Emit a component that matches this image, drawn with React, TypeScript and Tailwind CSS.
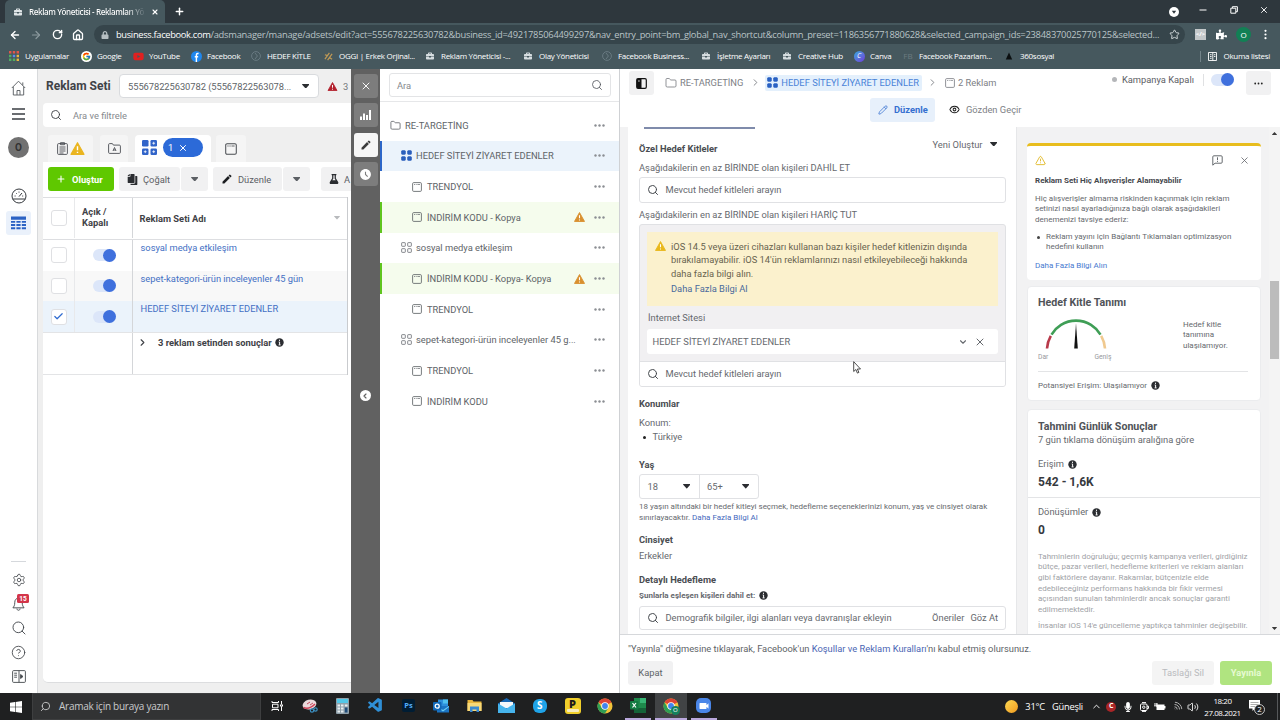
import type { ReactNode } from "react";
import {
  ArrowLeft, ArrowRight, Check, ChevronDown, ChevronLeft, ChevronRight, ChevronUp, CircleHelp, Eye, Folder,
  House, Pencil, Plus, RotateCw, Search, Settings, Star, TriangleAlert, Volume2, Wifi, X,
} from "lucide-react";
import { FaCopy, FaFlask, FaLock, FaMicrophone, FaPuzzlePiece, FaYoutube, FaBriefcase } from "react-icons/fa";
import { MdEdit, MdAccessTimeFilled, MdVideocam } from "react-icons/md";
import { FcGoogle } from "react-icons/fc";
import { VscVscode } from "react-icons/vsc";

/* ---------- small drawings ---------- */

const Caret = ({ className = "h-[4.5px] w-[7.5px]" }: { className?: string }) => (
  <svg viewBox="0 0 8 5" preserveAspectRatio="none" className={"shrink-0 " + className}><path d="M.5 0h7a.4.4 0 0 1 .3.7L4.400 4.700a.5.5 0 0 1-.8 0L.2.7A.4.4 0 0 1 .5 0z" fill="currentColor" /></svg>
);

const Warn = ({ className = "" }: { className?: string }) => (
  <svg viewBox="0 0 12 11" className={"shrink-0 " + className}>
    <path d="M6 .6 11.500 10.400H.5z" fill="currentColor" stroke="currentColor" strokeWidth="1" strokeLinejoin="round" />
    <path d="M6 3.600v3.400M6 8.200v1.200" stroke="#fff" strokeWidth="1.200" />
  </svg>
);

const Info = () => (
  <svg viewBox="0 0 9 9" className="ml-[3.500px] size-[9px] shrink-0"><circle cx="4.500" cy="4.500" r="4.200" fill="#2b2d31" /><path d="M4.500 1.700v1.200M3.700 4h.9v2.800M3.600 6.900h2" stroke="#fff" strokeWidth="1" /></svg>
);

const Tiles = ({ className = "", filled = false }: { className?: string; filled?: boolean }) => (
  <svg viewBox="0 0 12 12" className={"shrink-0 " + className} fill={filled ? "currentColor" : "none"} stroke="currentColor" strokeWidth=".9">
    <rect x=".7" y=".7" width="4" height="4" rx=".6" /><rect x="7.300" y=".7" width="4" height="4" rx=".6" />
    <rect x=".7" y="7.300" width="4" height="4" rx=".6" /><rect x="7.300" y="7.300" width="4" height="4" rx=".6" />
  </svg>
);

const AdFrame = ({ className = "" }: { className?: string }) => (
  <svg viewBox="0 0 10 10" className={"shrink-0 " + className} fill="none" stroke="currentColor" strokeWidth=".85">
    <rect x=".6" y=".6" width="8.800" height="8.800" rx="1.100" /><path d="M2 2.500h1M3.700 2.500h1M5.400 2.500h2.600" strokeWidth=".7" />
  </svg>
);

const Dots = () => (
  <svg viewBox="0 0 11 3" className="h-[3px] w-[11px] shrink-0 text-[#8b8e93]" fill="currentColor"><circle cx="1.500" cy="1.500" r="1.200" /><circle cx="5.500" cy="1.500" r="1.200" /><circle cx="9.500" cy="1.500" r="1.200" /></svg>
);

const Toggle = () => (
  <span className="flex h-3 w-[23px] items-center justify-end rounded-full bg-[#dce6f9]"><span className="size-[13px] rounded-full bg-[#3f70dd]" /></span>
);

/* ---------- browser chrome ---------- */

const Bookmark = ({ left, icon, children }: { left: string; icon: ReactNode; children: ReactNode }) => (
  <div className={"flex items-center whitespace-nowrap " + left}>
    <span className="flex w-[10px] shrink-0 justify-center">{icon}</span>
    <span className="ml-[6px]">{children}</span>
  </div>
);

const Case = () => <FaBriefcase className="size-[8px] text-[#d5dcdf]" />;
const Ring = () => <svg viewBox="0 0 10 10" className="size-[10px]" fill="none" stroke="#71838a" strokeWidth=".8"><circle cx="5" cy="5" r="4.400" /><path d="m4 2 2.400 3L4 8" /></svg>;

const Browser = () => (
  <header className="font-['Open_Sans',sans-serif] text-white">
    <div className="flex h-[23px] items-end bg-[#2e373d]">
      <div className="ml-[5px] flex h-[23px] w-[160px] items-center rounded-t-[5px] bg-[#46585e] pl-[9px]">
        <FaBriefcase className="size-[8px] text-[#dfe5e7]" />
        <span className="ml-[7px] w-[115px] overflow-hidden bg-linear-to-r from-white from-85% to-[#5b6b71] bg-clip-text text-[8px] font-semibold tracking-[-0.385px] whitespace-nowrap text-transparent">Reklam Yöneticisi - Reklamları Yö</span>
        <X className="ml-[6.500px] size-[8px]" strokeWidth={3.200} />
      </div>
      <Plus className="mb-[6.500px] ml-[9px] size-[11px]" strokeWidth={3.200} />
      <div className="mr-[11px] ml-auto flex h-[23px] items-center pb-[4px]">
        <svg viewBox="0 0 10 10" className="mt-[4px] mr-[20px] size-[10px]"><circle cx="5" cy="5" r="5" fill="#fff" /><path d="M2.800 3.800h4.400L5 6.800z" fill="#2e373d" /></svg>
        <svg viewBox="0 0 8 8" className="mr-[23px] size-2"><path d="M.5 4h7" stroke="#fff" strokeWidth="1" /></svg>
        <svg viewBox="0 0 8 8" className="mr-[21px] size-2" fill="none" stroke="#fff"><path d="M.8 2.200h5v5h-5z" /><path d="M2.400 2V.7h5v5H6" /></svg>
        <X className="size-[10px]" strokeWidth={2.200} />
      </div>
    </div>
    <div className="flex h-[23px] items-center bg-[#46585e]">
      <ArrowLeft className="ml-[8.500px] size-[12px]" strokeWidth={2.800} />
      <ArrowRight className="ml-[9px] size-[12px] text-[#8b999e]" strokeWidth={2.400} />
      <RotateCw className="ml-[10px] size-[11px]" strokeWidth={3} />
      <House className="ml-[9.500px] size-[12px]" strokeWidth={2.600} />
      <div className="ml-[10px] flex h-[19px] w-[1091px] items-center rounded-full bg-[#36454b] pl-[7px]">
        <FaLock className="size-[8px] text-[#b5bec1]" />
        <div className="ml-[7px] text-[9.330px] tracking-[-0.245px] whitespace-nowrap text-[#bac4c7]">
          <span className="tracking-[-0.336px] text-white">business.facebook.com</span>/adsmanager/manage/adsets/edit?act=555678225630782&amp;business_id=4921785064499297&amp;nav_entry_point=bm_global_nav_shortcut&amp;column_preset=1186356771880628&amp;selected_campaign_ids=23848370025770125&amp;selected...
        </div>
        <Star className="ml-auto mr-[5px] size-[11px] text-[#d9dfe1]" strokeWidth={2} />
      </div>
      <div className="ml-[10px] flex size-[11px] items-center justify-center bg-[#c3c8ca] text-[6px] font-bold text-white">&lt;/&gt;</div>
      <FaPuzzlePiece className="ml-[10px] size-[11px]" />
      <div className="ml-[9px] flex size-[15px] items-center justify-center rounded-full bg-[#128055] text-[8px]">O</div>
      <svg viewBox="0 0 3 12" className="ml-[13px] h-[11px] w-[3px]" fill="#fff"><circle cx="1.500" cy="2" r="1.200" /><circle cx="1.500" cy="6" r="1.200" /><circle cx="1.500" cy="10" r="1.200" /></svg>
    </div>
    <div className="flex h-[23px] items-center bg-[#46585e] pb-[3px] text-[8px] tracking-[-0.290px]">
      <Bookmark left="w-[72px] ml-[9px]" icon={
        <svg viewBox="0 0 10 10" className="size-[10px]">
          <path d="M0 0h2.400v2.400H0zM3.800 0h2.400v2.400H3.800zM7.600 0H10v2.400H7.600z" fill="#e0574a" />
          <path d="M0 3.800h2.400v2.400H0z" fill="#4fae62" /><path d="M3.800 3.800h2.400v2.400H3.800z" fill="#5b8def" /><path d="M7.600 3.800H10v2.400H7.600z" fill="#e9b740" />
          <path d="M0 7.600h2.400V10H0zM3.800 7.600h2.400V10H3.800z" fill="#4fae62" /><path d="M7.600 7.600H10V10H7.600z" fill="#e9b740" />
        </svg>}>Uygulamalar</Bookmark>
      <Bookmark left="w-[52px]" icon={<span className="flex size-[11px] shrink-0 items-center justify-center rounded-full bg-white"><FcGoogle className="size-[9px]" /></span>}>Google</Bookmark>
      <Bookmark left="w-[58px]" icon={<FaYoutube className="size-[11px] shrink-0 text-[#e02020]" />}>YouTube</Bookmark>
      <Bookmark left="w-[60px]" icon={<svg viewBox="0 0 10 10" className="size-[11px] shrink-0"><circle cx="5" cy="5" r="5" fill="#1f87ee" /><path d="M6.900 2.200h-.8c-.9 0-1.200.4-1.200 1.200V10M3.400 5.200h3.100" stroke="#fff" strokeWidth="1.300" fill="none" /></svg>}>Facebook</Bookmark>
      <Bookmark left="w-[72px]" icon={<Ring />}>HEDEF KİTLE</Bookmark>
      <Bookmark left="w-[102px]" icon={<svg viewBox="0 0 10 10" className="size-[9px]" stroke="#c29a55" strokeWidth="1.300"><path d="M1 8 6 1M4 9l5-7M1 3l3 1M6 6l3 2" /></svg>}>OGGI | Erkek Orjinal...</Bookmark>
      <Bookmark left="w-[98px]" icon={<Case />}>Reklam Yöneticisi -...</Bookmark>
      <Bookmark left="w-[79px]" icon={<Case />}>Olay Yöneticisi</Bookmark>
      <Bookmark left="w-[99px]" icon={<Ring />}>Facebook Business...</Bookmark>
      <Bookmark left="w-[81px]" icon={<Case />}>İşletme Ayarları</Bookmark>
      <Bookmark left="w-[72px]" icon={<Case />}>Creative Hub</Bookmark>
      <Bookmark left="w-[49px]" icon={<span className="flex size-[11px] shrink-0 items-center justify-center rounded-full bg-linear-to-br from-[#23a6dd] to-[#6a35d9] text-[7px] italic">C</span>}>Canva</Bookmark>
      <Bookmark left="w-[101px]" icon={<span className="text-[8px] tracking-normal text-[#6c7b80]">FB</span>}>Facebook Pazarlam...</Bookmark>
      <Bookmark left="w-[60px]" icon={<svg viewBox="0 0 8 8" className="size-2"><path d="M4 .5 7.200 7.500H.8z" fill="#0b0f10" /></svg>}>360sosyal</Bookmark>
      <div className="mr-[10px] ml-auto flex items-center">
        <span className="h-[11px] w-px bg-[#73848a]" />
        <svg viewBox="0 0 9 9" className="mr-[6px] ml-[7px] size-[9px]" fill="none" stroke="#fff" strokeWidth=".9"><path d="M.5.5h8v8h-8zM4.800.5v8M2 2.700h1.600M2 4.500h1.600M2 6.300h1.600M6 2.700h1.400M6 4.500h1.400" /></svg>
        Okuma listesi
      </div>
    </div>
  </header>
);

/* ---------- far left navigation ---------- */

const Sidebar = () => (
  <nav className="flex w-[38px] flex-col items-center border-r border-[#d8dadc] bg-white pt-[6px] text-[#43474c]">
    <svg viewBox="0 0 15 16" className="mt-[5px] h-[16px] w-[15px]" fill="none" stroke="#55595e" strokeWidth=".9" strokeLinejoin="round"><path d="M.8 8 7.500 1.200 14.200 8M2.300 6.800V15h10.400V6.800M6 15v-4.500h3V15M11.800 5.300V2.400" /></svg>
    <svg viewBox="0 0 13 12" className="mt-[12px] h-[12px] w-[13px]" stroke="#3a3e43" strokeWidth="1.300"><path d="M0 1h13M0 6h13M0 11h13" /></svg>
    <div className="mt-[17px] flex size-[21px] items-center justify-center rounded-full bg-[#717171] text-[10px] font-bold text-[#333]">O</div>
    <svg viewBox="0 0 16 16" className="mt-[30px] size-[16px]" fill="none" stroke="#34383d" strokeWidth="1"><circle cx="8" cy="8" r="7" /><path d="M1.600 11h12.800M8 8.600 11 5M3.600 8h1M5 5l.7.7M8 3.600v1M12.200 8h-1" /></svg>
    <div className="mt-[7px] flex h-[24px] w-[25px] items-center justify-center rounded-[3px] bg-[#eaf1fb]">
      <svg viewBox="0 0 15 14" className="h-[14px] w-[15px]" fill="#2b62c4"><path d="M0 .5h15v3.200H0zM0 5h4.200v1.800H0zM5.400 5h4.200v1.800H5.400zM10.800 5H15v1.800h-4.200zM0 8.100h4.200v1.800H0zM5.400 8.100h4.200v1.800H5.400zM10.800 8.100H15v1.800h-4.200zM0 11.300h4.200v1.900H0zM5.400 11.300h4.200v1.900H5.400zM10.800 11.300H15v1.900h-4.200z" /></svg>
    </div>
    <div className="mt-auto h-px w-[15px] bg-[#d5d8dc]" />
    <div className="mt-[6px] flex h-[24px] items-center"><Settings className="size-[14px]" strokeWidth={1.400} /></div>
    <div className="relative flex h-[24px] items-center">
      <svg viewBox="0 0 14 16" className="mt-[1px] h-[15px] w-[13px]" fill="none" stroke="currentColor" strokeWidth="1"><path d="M7 1.200C4.400 1.200 3 3.200 3 5.600c0 3.600-1 4.600-2 6h12c-1-1.400-2-2.400-2-6 0-2.400-1.400-4.400-4-4.400zM5.300 12.400c0 2.400 3.400 2.400 3.400 0" /></svg>
      <span className="absolute top-[2px] left-[5px] flex h-[9px] w-[12px] items-center justify-center rounded-[1.500px] bg-[#d3354a] text-[6.500px] font-bold text-white">15</span>
    </div>
    <div className="flex h-[24px] items-center"><Search className="size-[16px]" strokeWidth={1.400} /></div>
    <div className="flex h-[24px] items-center"><CircleHelp className="size-[15px]" strokeWidth={1.400} /></div>
    <div className="mb-[5px] flex h-[24px] items-center">
      <svg viewBox="0 0 14 13" className="h-[13px] w-[14px]" fill="none" stroke="currentColor" strokeWidth=".9"><rect x=".6" y=".6" width="12.800" height="11.800" rx="1" /><path d="M7 .6v11.800M2.200 3.200h2.800M2.200 5.200h2.800M2.200 7.200h2.800" /><path d="M8.600 4.500 11 6.500 8.600 8.500z" fill="currentColor" /></svg>
    </div>
  </nav>
);

/* ---------- ad set list ---------- */

const CheckBox = ({ on = false }: { on?: boolean }) => (
  <span className="flex size-[16px] items-center justify-center rounded-[3px] border border-[#dfe0e3] bg-white">{on && <Check className="size-[11px] text-[#2f6bd0]" strokeWidth={2.600} />}</span>
);

const Btn = ({ className, children }: { className: string; children?: ReactNode }) => (
  <div className={"flex h-[24px] shrink-0 items-center rounded-[3px] bg-[#f1f1f2] whitespace-nowrap text-[#5c6065] " + className}>{children}</div>
);

const SetRow = ({ bg, name, on }: { bg: string; name: string; on?: boolean }) => (
  <div className={"flex h-[30.670px] " + bg}>
    <div className="flex w-[32px] items-center justify-center border-r border-[#e8e9eb]"><CheckBox on={on} /></div>
    <div className="flex w-[58px] items-center justify-center border-r border-[#d4d6d9] pl-[2px]"><Toggle /></div>
    <div className="flex-1 pt-[1px] pl-[7.500px] leading-[14px] text-[#4470c4]">{name}</div>
  </div>
);

const AdSets = () => (
  <section className="w-[313px] shrink-0 overflow-hidden bg-[#efefef] pl-[5px]">
    <div className="flex h-[32px] items-center pt-[2px] pl-[3px] whitespace-nowrap">
      <h1 className="w-[73px] text-[12px] font-bold text-[#3f4247]">Reklam Seti</h1>
      <div className="flex h-[24px] w-[200px] shrink-0 items-center rounded-[4px] border border-[#d9dbde] bg-white pl-[8px] tracking-[-0.050px] text-[#606468]">555678225630782 (55567822563078...<span className="mr-[9px] ml-auto text-[#2b2d31]"><Caret /></span></div>
      <Warn className="mr-[5px] ml-[8px] h-[9px] w-[11px] text-[#b3202c]" /><span className="text-[#74777b]">3</span>
    </div>
    <div className="mt-[2px] flex h-[24px] items-center rounded-l-[4px] bg-white pl-[7px] text-[#85898d]"><Search className="mr-[11px] size-[12px] text-[#3a3d42]" strokeWidth={1.800} />Ara ve filtrele</div>
    <div className="mt-[8px] flex h-[27px] items-stretch gap-[7px] pl-[5px]">
      <div className="flex w-[45px] items-center justify-center gap-[2px] rounded-t-[3px] bg-[#f5f5f5]">
        <svg viewBox="0 0 11 13" className="h-[13px] w-[11px]" fill="none" stroke="#4a4d52" strokeWidth=".9"><rect x=".6" y="1.600" width="9.800" height="10.800" rx="1" /><path d="M3.500.7h4v2h-4zM2.500 5h6M2.500 7h6M2.500 9h6M2.500 11h4" /></svg>
        <Warn className="h-[13px] w-[15px] text-[#eab520]" />
      </div>
      <div className="flex w-[28px] items-center justify-center rounded-t-[3px] bg-[#f5f5f5]">
        <svg viewBox="0 0 13 11" className="h-[11px] w-[13px]" fill="none" stroke="#4a4d52" strokeWidth=".9"><path d="M.6 1.600c0-.6.4-1 1-1h2.800l1 1.500h6c.6 0 1 .4 1 1v6.300c0 .6-.4 1-1 1H1.600c-.6 0-1-.4-1-1zM5 8l1.500-3.500L8 8M5.500 7h2" /></svg>
      </div>
      <div className="flex w-[76px] items-center rounded-t-[4px] bg-white pb-[2px] pl-[7px]">
        <svg viewBox="0 0 15 15" className="size-[15px]" fill="#3164c9"><rect width="6.500" height="6.500" rx="1.200" /><rect x="8.500" width="6.500" height="6.500" rx="1.200" /><rect y="8.500" width="6.500" height="6.500" rx="1.200" /><rect x="8.500" y="8.500" width="6.500" height="6.500" rx="1.200" /><path d="M11.700 1.800v2.800M10.300 3.250h2.800M3.250 10.300v2.800M1.800 11.700h2.800M11.700 10.300v2.800M10.300 11.700h2.800" stroke="#fff" strokeWidth=".8" /></svg>
        <div className="ml-[6px] flex h-[19px] w-[40px] items-center rounded-full bg-[#2c6ad8] pl-[5px] text-white">1<X className="ml-[5px] size-[10px]" strokeWidth={2.400} /></div>
      </div>
      <div className="-ml-[2px] flex w-[30px] items-center justify-center rounded-t-[3px] bg-[#f5f5f5]"><AdFrame className="size-[12px] text-[#4a4d52]" /></div>
    </div>
    <div className="h-[521px] rounded-bl-[5px] border-b border-[#dcdddf] bg-white">
      <div className="flex h-[35px] items-start gap-[5px] pt-[5px] pl-[5px]">
        <div className="flex h-[24px] w-[66px] shrink-0 items-center rounded-[3px] bg-[#5fc800] pl-[8px] font-bold text-white"><Plus className="mr-[6px] size-[10px]" strokeWidth={2.600} />Oluştur</div>
        <div className="flex gap-px">
          <Btn className="w-[61px] pl-[8px]"><FaCopy className="mr-[5px] size-[11px] -scale-x-100 text-[#2b2d31]" />Çoğalt</Btn>
          <Btn className="w-[27px] justify-center text-[#2b2d31]"><Caret /></Btn>
        </div>
        <div className="flex gap-px">
          <Btn className="w-[69px] pl-[8px]"><MdEdit className="mr-[5px] size-[12px] text-[#1c1e21]" />Düzenle</Btn>
          <Btn className="w-[27px] justify-center text-[#2b2d31]"><Caret /></Btn>
        </div>
        <Btn className="ml-[6px] w-[60px] pl-[8px]"><FaFlask className="mr-[5px] size-[10px] text-[#2b2d31]" />A</Btn>
      </div>
      <div className="mr-[3px] border-r border-[#c9cbce]">
        <div className="flex h-[43px] border-y border-[#dddee1] pb-px font-bold text-[#3f4247]">
          <div className="flex w-[32px] items-center justify-center border-r border-[#e8e9eb]"><CheckBox /></div>
          <div className="flex w-[58px] items-center border-r border-[#d4d6d9] pl-[7px] leading-[10.670px]">Açık /<br />Kapalı</div>
          <div className="flex flex-1 items-center justify-between pr-[7px] pl-[6.500px] text-[#3f4247]">Reklam Seti Adı<span className="text-[#b8babd]"><Caret className="h-[3.500px] w-[6px]" /></span></div>
        </div>
        <SetRow bg="bg-white" name="sosyal medya etkileşim" />
        <SetRow bg="bg-[#f8f8f8]" name="sepet-kategori-ürün inceleyenler 45 gün" />
        <SetRow bg="bg-[#ebf3fb]" name="HEDEF SİTEYİ ZİYARET EDENLER" on />
        <div className="flex h-[43px] border-y border-[#e3e4e6] font-bold text-[#3f4247]">
          <div className="w-[90px] border-r border-[#d4d6d9]" />
          <div className="flex h-[20px] items-center pl-[4px]"><ChevronRight className="mr-[10px] size-[11px]" strokeWidth={2.400} />3 reklam setinden sonuçlar<Info /></div>
        </div>
      </div>
    </div>
  </section>
);

/* ---------- dark rail ---------- */

const Rail = () => (
  <div className="flex w-[29px] shrink-0 flex-col items-center gap-[5.400px] bg-[#616161] pt-[5px] text-white">
    <div className="flex size-[24px] items-center justify-center rounded-[3px] bg-[#7d7d7d]"><X className="size-[12px]" strokeWidth={1.900} /></div>
    <div className="flex size-[24px] items-center justify-center rounded-[3px] bg-[#7d7d7d]">
      <svg viewBox="0 0 11 10" className="h-[10px] w-[11px]" fill="#fff"><path d="M0 6.500h2V10H0zM3 3.500h2V10H3zM6 5h2v5H6zM9 0h2v10H9z" /></svg>
    </div>
    <div className="flex size-[24px] items-center justify-center rounded-[3px] bg-[#f6f6f6]"><MdEdit className="size-[12px] text-[#3c3c3c]" /></div>
    <div className="flex size-[24px] items-center justify-center rounded-[3px] bg-[#7d7d7d]"><MdAccessTimeFilled className="size-[13px]" /></div>
    <div className="mt-[198.500px] flex size-[11px] items-center justify-center rounded-full bg-white"><ChevronLeft className="mr-px size-[8px] text-[#616161]" strokeWidth={3.500} /></div>
  </div>
);

/* ---------- campaign tree ---------- */

type Node = { text: string; level: 0 | 1 | 2; tone?: "blue" | "green" };
const nodes: Node[] = [
  { text: "RE-TARGETİNG", level: 0 },
  { text: "HEDEF SİTEYİ ZİYARET EDENLER", level: 1, tone: "blue" },
  { text: "TRENDYOL", level: 2 },
  { text: "İNDİRİM KODU - Kopya", level: 2, tone: "green" },
  { text: "sosyal medya etkileşim", level: 1 },
  { text: "İNDİRİM KODU - Kopya- Kopya", level: 2, tone: "green" },
  { text: "TRENDYOL", level: 2 },
  { text: "sepet-kategori-ürün inceleyenler 45 g...", level: 1 },
  { text: "TRENDYOL", level: 2 },
  { text: "İNDİRİM KODU", level: 2 },
];
const indent = ["pl-[8px]", "pl-[19px]", "pl-[30px]"];
const tones = { blue: "border-[#2c66c8] bg-[#ebf3fb]", green: "border-[#5fc51e] bg-[#f5fced]", none: "border-transparent" };

const Tree = () => (
  <section className="flex w-[240px] shrink-0 flex-col border-r border-[#cfd1d4] bg-white">
    <div className="h-[33px] border-b border-[#e6e7e9] pt-[4px] pr-[8px] pl-[9px]">
      <div className="flex h-[24px] items-center justify-between rounded-[3px] border border-[#e3e4e6] px-[7px] text-[#85898d]">Ara<Search className="size-[12px] text-[#55595e]" strokeWidth={1.700} /></div>
    </div>
    <div className="mt-[8px]">
      {nodes.map((n, i) => (
        <div key={i} className={"flex h-[30.670px] items-center border-l-2 pr-[14px] whitespace-nowrap text-[#606468] " + indent[n.level] + " " + tones[n.tone ?? "none"]}>
          {n.level === 0 && <Folder className="mr-[4px] size-[11px]" strokeWidth={1.800} />}
          {n.level === 1 && <Tiles filled={n.tone === "blue"} className={"mr-[4px] size-[11px] " + (n.tone === "blue" ? "text-[#2c60bd]" : "text-[#6b6f74]")} />}
          {n.level === 2 && <AdFrame className="mr-[5px] size-[10px]" />}
          <span className="flex-1">{n.text}</span>
          {n.tone === "green" && <Warn className="mr-[9px] h-[10px] w-[11px] text-[#d9902f]" />}
          <Dots />
        </div>
      ))}
    </div>
  </section>
);

/* ---------- editor ---------- */

const EditorHeader = () => (
  <div className="h-[58px] shrink-0 bg-white text-[#7d8085]">
    <div className="flex h-[27px] items-center pl-[9px] whitespace-nowrap">
      <div className="mt-px mr-[11px] flex h-[24px] w-[25px] items-center justify-center rounded-[3px] bg-[#f1f1f2]">
        <svg viewBox="0 0 11 11" className="size-[11px]"><rect x=".7" y=".7" width="9.600" height="9.600" rx="1.300" fill="none" stroke="#111" strokeWidth="1.200" /><path d="M1 1h4.500v9H1z" fill="#111" /><path d="M2 3h1.800" stroke="#ccc" /></svg>
      </div>
      <Folder className="mr-[3px] size-[12px]" strokeWidth={1.700} /><span className="tracking-[-0.020px]">RE-TARGETİNG</span>
      <ChevronRight className="mr-[4px] ml-[7px] size-[11px]" strokeWidth={2} />
      <div className="flex h-[16px] items-center rounded-[2px] bg-[#e4f0fc] pr-[3px] pl-[2px] text-[#4a83d8]"><Tiles filled className="mr-[3px] size-[11px] text-[#2b62c4]" />HEDEF SİTEYİ ZİYARET EDENLER</div>
      <ChevronRight className="mr-[7px] ml-[5px] size-[11px]" strokeWidth={2} />
      <AdFrame className="mr-[3px] size-[10px]" />2 Reklam
      <div className="mr-[9px] ml-auto flex h-[27px] items-center text-[#5c6065]">
        <div className="-mt-[6px] flex items-center"><span className="mr-[5px] size-[5px] rounded-full bg-[#b4b6b9]" />Kampanya Kapalı<span className="mr-[7px] ml-[9px] h-[12px] w-px bg-[#e0e1e3]" /><Toggle /></div>
        <div className="mt-px ml-[12px] flex h-[24px] w-[25px] items-center justify-center rounded-[3px] bg-[#f1f1f2]"><svg viewBox="0 0 9 3" className="h-[3px] w-[9px]" fill="#222"><circle cx="1.200" cy="1.500" r=".9" /><circle cx="4.500" cy="1.500" r=".9" /><circle cx="7.800" cy="1.500" r=".9" /></svg></div>
      </div>
    </div>
    <div className="mt-[2px] flex h-[24px] items-center pl-[250px]">
      <div className="mr-[14px] flex h-[24px] w-[65px] items-center rounded-[3px] bg-[#e7f0fb] pb-px pl-[8px] font-bold text-[#356fd0]"><Pencil className="mr-[6px] size-[10px]" strokeWidth={1.800} />Düzenle</div>
      <div className="flex items-center pb-px"><Eye className="mr-[6px] size-[11px] text-[#222]" strokeWidth={2.200} />Gözden Geçir</div>
    </div>
  </div>
);

const Field = ({ className = "", children }: { className?: string; children: ReactNode }) => (
  <div className={"flex items-center rounded-[3px] border border-[#e0e1e4] bg-white pl-[7px] " + className}><Search className="mr-[6.500px] size-[12px] shrink-0 text-[#44484d]" strokeWidth={2} />{children}</div>
);
const H = ({ className, children }: { className: string; children: ReactNode }) => <h3 className={"h-[14px] leading-[14px] font-bold text-[#4a4d52] " + className}>{children}</h3>;
const P = ({ className, children }: { className: string; children: ReactNode }) => <p className={"h-[14px] leading-[14px] " + className}>{children}</p>;

const Form = () => (
  <div className="w-[389px] shrink-0 border-r border-[#e6e7e9] bg-white pr-[10px] pl-[11px] whitespace-nowrap text-[#66696e]">
    <div className="ml-[5px] h-[2px] w-[111px] bg-[#7f8bab]" />
    <div className="mt-[8px] flex h-[22px] items-center justify-between">
      <h3 className="font-bold text-[#4a4d52]">Özel Hedef Kitleler</h3>
      <div className="mr-[9px] flex h-[14px] items-center self-start">Yeni Oluştur<span className="ml-[7px] text-[#2b2d31]"><Caret /></span></div>
    </div>
    <P className="mt-[2px]">Aşağıdakilerin en az BİRİNDE olan kişileri DAHİL ET</P>
    <Field className="mt-[2px] h-[26px] pb-px">Mevcut hedef kitleleri arayın</Field>
    <P className="mt-[5px]">Aşağıdakilerin en az BİRİNDE olan kişileri HARİÇ TUT</P>
    <div className="mt-[2px] h-[163px] overflow-hidden rounded-[3px] border border-[#e0e1e4] bg-[#f1f0f2]">
      <div className="mx-[7px] mt-[7px] flex h-[74px] bg-[#fbf1cd] pt-[8px] pl-[8px]">
        <Warn className="mt-[1px] mr-[5px] h-[10px] w-[11px] text-[#e9b81c]" />
        <div className="leading-[13.330px] text-[#68634f]">iOS 14.5 veya üzeri cihazları kullanan bazı kişiler hedef kitlenizin dışında<br />bırakılamayabilir. iOS 14'ün reklamlarınızı nasıl etkileyebileceği hakkında<br />daha fazla bilgi alın.<div className="mt-[2.500px] text-[#4a6a9c]">Daha Fazla Bilgi Al</div></div>
      </div>
      <P className="mt-[5px] pl-[8px]">İnternet Sitesi</P>
      <div className="mx-[7px] mt-[4px] flex h-[25px] items-center rounded-[3px] bg-white pl-[5.500px]">HEDEF SİTEYİ ZİYARET EDENLER<ChevronDown className="mr-[6px] ml-auto size-[10px]" strokeWidth={2.600} /><X className="mr-[12px] size-[12px]" strokeWidth={2} /></div>
      <div className="mt-[7px] flex h-[25px] items-center border-t border-[#e0e1e4] bg-white pb-px pl-[7px]"><Search className="mr-[6.500px] size-[12px] text-[#44484d]" strokeWidth={2} />Mevcut hedef kitleleri arayın</div>
    </div>
    <H className="mt-[10px]">Konumlar</H>
    <P className="mt-[5px]">Konum:</P>
    <div className="-mt-px flex h-[15px] items-center"><span className="mt-[2px] mr-[7px] ml-[4px] size-[2.500px] rounded-full bg-[#222]" />Türkiye</div>
    <H className="mt-[14px]">Yaş</H>
    <div className="mt-[2px] flex h-[25px] w-[120px] items-center rounded-[3px] border border-[#e0e1e4]">
      <div className="flex h-full w-[60px] items-center justify-between border-r border-[#e0e1e4] pr-[9px] pl-[7.500px]">18<span className="text-[#2b2d31]"><Caret /></span></div>
      <div className="flex flex-1 items-center justify-between pr-[9px] pl-[7px]">65+<span className="text-[#2b2d31]"><Caret /></span></div>
    </div>
    <div className="mt-[3px] text-[8px] leading-[10.670px]">18 yaşın altındaki bir hedef kitleyi seçmek, hedefleme seçeneklerinizi konum, yaş ve cinsiyet olarak<br />sınırlayacaktır. <span className="text-[#4468bd]">Daha Fazla Bilgi Al</span></div>
    <H className="mt-[10px]">Cinsiyet</H>
    <P className="mt-[2px]">Erkekler</P>
    <H className="mt-[10px]">Detaylı Hedefleme</H>
    <div className="mt-[1px] flex h-[14px] items-center text-[8px] font-bold">Şunlarla eşleşen kişileri dahil et:<Info /></div>
    <Field className="mt-[3.500px] h-[24px] pr-[7px]">Demografik bilgiler, ilgi alanları veya davranışlar ekleyin<span className="mr-[6px] ml-auto">Öneriler</span>Göz At</Field>
  </div>
);

const Insights = () => (
  <aside className="ml-[10px] w-[234px] shrink-0 overflow-hidden pt-[16px] text-[#66696e]">
    <div className="h-[137px] rounded-[4px] border-t-[3px] border-[#e8bd1d] bg-white pr-[11px] pl-[8px]">
      <div className="flex h-[28px] items-center">
        <TriangleAlert className="size-[11px] text-[#dfb51c]" strokeWidth={1.900} />
        <svg viewBox="0 0 11 11" className="mr-[16px] ml-auto size-[11px]" fill="none" stroke="#55595e" strokeWidth=".9"><path d="M.8 10.200V1.800c0-.6.4-1 1-1h7.400c.6 0 1 .4 1 1v5.400c0 .6-.4 1-1 1H3zM5.500 2.300v2.900M5.500 6v.9" /></svg>
        <X className="size-[11px]" strokeWidth={1.800} />
      </div>
      <div className="h-[14px] text-[8px] leading-[14px] font-bold text-[#45484d]">Reklam Seti Hiç Alışverişler Alamayabilir</div>
      <p className="mt-[5.500px] text-[8px] leading-[10.670px] whitespace-nowrap">Hiç alışverişler almama riskinden kaçınmak için reklam<br />setinizi nasıl ayarladığınıza bağlı olarak aşağıdakileri<br />denemenizi tavsiye ederiz:</p>
      <div className="mt-[6.200px] flex text-[8px] leading-[10.670px] whitespace-nowrap"><span className="mt-[4px] mr-[6.500px] ml-[1.500px] size-[3px] rounded-full bg-[#444]" /><p>Reklam yayını için Bağlantı Tıklamaları optimizasyon<br />hedefini kullanın</p></div>
      <div className="mt-[8px] text-[8px] leading-[10.670px] text-[#4779cf]">Daha Fazla Bilgi Alın</div>
    </div>
    <div className="mt-[6px] h-[115px] rounded-[4px] border border-[#ebecee] bg-white pt-[9px] pr-[12px] pl-[10px]">
      <h3 className="h-[14px] text-[10.670px] leading-[14px] font-bold text-[#505358]">Hedef Kitle Tanımı</h3>
      <div className="flex h-[59px]">
        <svg viewBox="0 0 76 50" className="mt-[8px] h-[50px] w-[76px]" fill="none" strokeWidth="2.600">
          <path d="M9 30.500A29 29 0 0 1 12.800 17.800" stroke="#b8394a" />
          <path d="M13.500 16.600A28.500 28.500 0 0 1 62.500 16.600" stroke="#3f9e56" />
          <path d="M63.200 17.800A29 29 0 0 1 67 30.500" stroke="#f0c98f" />
          <path d="M38 5.500 39.800 30.500h-3.600z" fill="#111" />
          <text x="0" y="41" fontSize="6.700" fill="#97999d">Dar</text><text x="56.500" y="41" fontSize="6.700" fill="#97999d">Geniş</text>
        </svg>
        <p className="mt-[9.500px] ml-auto w-[65px] text-[8px] leading-[10.670px]">Hedef kitle<br />tanımına<br />ulaşılamıyor.</p>
      </div>
      <div className="mt-[2px] flex h-[24px] items-center border-t border-[#e3e4e6] pt-[3px] text-[8px]">Potansiyel Erişim: Ulaşılamıyor<Info /></div>
    </div>
    <div className="mt-[8px] h-[260px] rounded-[4px] border border-[#ebecee] bg-white pt-[10px] pl-[10px]">
      <h3 className="h-[14px] text-[10.670px] leading-[14px] font-bold tracking-[-0.030px] text-[#505358]">Tahmini Günlük Sonuçlar</h3>
      <P className="-mt-px">7 gün tıklama dönüşüm aralığına göre</P>
      <P className="mt-[10px] flex items-center">Erişim<Info /></P>
      <div className="mt-[2.500px] h-[16px] text-[12px] leading-[16px] font-bold text-[#36393e]">542 - 1,6K</div>
      <div className="mt-[7.500px] -ml-[10px] h-px bg-[#e3e4e6]" />
      <P className="mt-[7px] flex items-center">Dönüşümler<Info /></P>
      <div className="mt-[3px] h-[16px] text-[12px] leading-[16px] font-bold text-[#36393e]">0</div>
      <p className="mt-[13.700px] text-[8px] leading-[10.670px] whitespace-nowrap text-[#a0a2a6]">Tahminlerin doğruluğu; geçmiş kampanya verileri, girdiğiniz<br />bütçe, pazar verileri, hedefleme kriterleri ve reklam alanları<br />gibi faktörlere dayanır. Rakamlar, bütçenizle elde<br />edebileceğiniz performans hakkında bir fikir vermesi<br />açısından sunulan tahminlerdir ancak sonuçlar garanti<br />edilmemektedir.</p>
      <p className="mt-[5.300px] text-[8px] leading-[10.670px] whitespace-nowrap text-[#a0a2a6]">İnsanlar iOS 14'e güncelleme yaptıkça tahminler değişebilir.<br />Daha Fazla Bilgi Al</p>
    </div>
  </aside>
);

const Editor = () => (
  <main className="flex min-w-0 flex-1 flex-col bg-white">
    <EditorHeader />
    <div className="flex h-[507px] shrink-0 overflow-hidden bg-[#f2f2f3] pl-[8px]">
      <Form />
      <Insights />
      <div className="ml-auto flex w-[11px] flex-col items-center bg-[#f4f4f4] pt-[5px] text-[#3a3a3a]">
        <Caret className="h-[3px] w-[5px] rotate-180" />
        <div className="mt-[146px] h-[78px] w-[9px] bg-[#bcbcbc]" />
        <Caret className="mt-auto mb-[4px] h-[3px] w-[5px]" />
      </div>
    </div>
    <footer className="flex-1 border-t border-[#d6d8db] px-[8px] pt-[7px] text-[#606468]">
      <p className="h-[14px] leading-[14px] tracking-[-0.010px] whitespace-nowrap">"Yayınla" düğmesine tıklayarak, Facebook'un <span className="text-[#4b66b4]">Koşullar ve Reklam Kuralları</span>'nı kabul etmiş olursunuz.</p>
      <div className="mt-[5px] flex h-[24px] gap-[6px]">
        <div className="mr-auto flex w-[45px] items-center justify-center rounded-[3px] bg-[#f1f1f2] pb-px">Kapat</div>
        <div className="flex w-[62px] items-center justify-center rounded-[3px] bg-[#f4f4f4] pb-px text-[#b9bbbe]">Taslağı Sil</div>
        <div className="flex w-[52px] items-center justify-center rounded-[3px] bg-[#b0e480] pb-px font-bold text-[#e6fad2]">Yayınla</div>
      </div>
    </footer>
  </main>
);

/* ---------- desktop taskbar ---------- */

const Chrome = () => (
  <svg viewBox="0 0 16 16" className="size-[16px]"><circle cx="8" cy="8" r="7.500" fill="#f2c33a" /><path d="M8 8 1.500 4.250A7.500 7.500 0 0 1 14.500 4.250z" fill="#dd4437" /><path d="M1.500 4.250A7.500 7.500 0 0 0 8 15.500l3.200-5.600H4.750z" fill="#2f9e55" /><circle cx="8" cy="8" r="3.700" fill="#fff" /><circle cx="8" cy="8" r="2.900" fill="#4284ee" /></svg>
);

const App16 = ({ children, active, line }: { children: ReactNode; active?: boolean; line?: boolean }) => (
  <div className={"flex h-full w-[32.800px] shrink-0 flex-col items-center justify-between " + (active ? "bg-[#414345]" : "")}>
    <span className="h-0" />
    {children}
    <span className={"h-[2px] " + (active ? "w-full bg-[#b9a7dc]" : line ? "w-[26px] bg-[#b9a7dc]" : "")} />
  </div>
);

const Taskbar = () => (
  <div className="flex h-[27px] items-center bg-[#1f2021] font-['Open_Sans',sans-serif] text-white">
    <div className="flex w-[32px] justify-center"><svg viewBox="0 0 12 12" className="size-[12px]" fill="#fff"><path d="M0 1.700 5 1v4.700H0zM5.600.9 12 0v5.700H5.600zM0 6.300h5V11l-5-.7zM5.600 6.300H12V12l-6.400-.9z" /></svg></div>
    <div className="flex h-full w-[229px] items-center border border-[#3e3f40] bg-[#323334] pl-[7px] text-[10px] tracking-[-0.257px] text-[#c9cacb]"><Search className="mr-[8px] size-[11px] -scale-x-100" strokeWidth={2} />Aramak için buraya yazın</div>
    <App16><svg viewBox="0 0 12 12" className="size-[12px]" fill="none" stroke="#fff" strokeWidth="1"><path d="M1 1v1.500h6.500V1M1.500 4.200H7v3.600H1.500zM1 11V9.500h6.500V11M10.500 1v3M10.500 6.500V11M9.500 4.800h2v1.400h-2z" /></svg></App16>
    <App16><svg viewBox="0 0 16 16" className="size-[16px]"><ellipse cx="7.500" cy="6.500" rx="7" ry="4.800" fill="#ead9dc" transform="rotate(-15 7.500 6.500)" /><path d="M1.500 9.500Q7 12 13 6" stroke="#d14358" strokeWidth="1.500" fill="none" /><path d="m5 6 3-2M8 7l3-2" stroke="#c54a5c" /><circle cx="10" cy="12.500" r="1.700" fill="none" stroke="#3c8fc0" strokeWidth="1.200" /><circle cx="13.500" cy="11.500" r="1.700" fill="none" stroke="#3c8fc0" strokeWidth="1.200" /></svg></App16>
    <App16><svg viewBox="0 0 13 16" className="h-[16px] w-[13px]"><rect width="13" height="16" rx="1" fill="#8fa0aa" /><path d="M1 1h11v4H1z" fill="#52c7e8" /><path d="M1.500 6.500h2.500v2H1.500zM5 6.500h2.500v2H5zM1.500 9.500h2.500v2H1.500zM5 9.500h2.500v2H5zM1.500 12.500h2.500v2H1.500zM5 12.500h2.500v2H5z" fill="#e8eef1" /><path d="M8.800 6.500h2.700v2H8.800z" fill="#e8eef1" /><path d="M8.800 9.500h2.700v5H8.800z" fill="#214d7a" /></svg></App16>
    <App16><VscVscode className="size-[17px] text-[#2f8fd6]" /></App16>
    <App16><span className="flex size-[13px] items-center justify-center rounded-[2px] bg-[#001d34] text-[7.500px] font-bold text-[#55aefc]">Ps</span></App16>
    <App16><svg viewBox="0 0 16 16" className="size-[16px]"><path d="M5 1.500h10v8H5z" fill="#2d8fdc" /><path d="M10 1.500h5v4h-5z" fill="#4fc0f0" /><path d="M4 8h12v6.500H4z" fill="#1b74c4" /><path d="m4 8 6 4 6-4v1l-6 4.500L4 9z" fill="#6ed0f5" /><rect y="4" width="8.500" height="8.500" rx="1" fill="#1168b8" /><circle cx="4.200" cy="8.200" r="2" fill="none" stroke="#fff" strokeWidth="1.300" /></svg></App16>
    <App16><svg viewBox="0 0 15 13" className="h-[13px] w-[15px]"><path d="M.5 1h5l1 1.500h8V12H.5z" fill="#eab63d" /><path d="M.5 4h14v8H.5z" fill="#f8d978" /><path d="M3 7.500h9V13H9.500v-2.500h-4V13H3z" fill="#3c8ad0" /></svg></App16>
    <App16><svg viewBox="0 0 17 15" className="h-[15px] w-[17px]"><path d="M0 5.500 8.500 0 17 5.500V15H0z" fill="#1667b5" /><path d="M2 4h13v6H2z" fill="#f3f7fa" /><path d="M0 5.500 8.500 10.500 17 5.500V15H0z" fill="#46b4ec" /></svg></App16>
    <App16><span className="flex size-[14px] items-center justify-center rounded-[6px] bg-[#1fa3e8] text-[10px] font-bold">S</span></App16>
    <App16><span className="flex h-[16px] w-[16px] flex-col items-center rounded-[3px] bg-[#f1cf2b] text-[11px] leading-[11px] font-extrabold text-[#1b1b1b]">P<span className="h-[3px] w-[12px] rounded-[1px] bg-[#f6edc0]" /></span></App16>
    <App16><Chrome /></App16>
    <App16 line><svg viewBox="0 0 16 15" className="h-[15px] w-[16px]"><path d="M4 0h12v15H4z" fill="#1e8a4c" /><path d="M10 0h6v5h-6z" fill="#38b676" /><path d="M4 10h12v5H4z" fill="#156239" /><rect y="3" width="8.500" height="8.500" rx="1" fill="#127a42" /><path d="m2.500 5 3.500 4.500M6 5 2.500 9.500" stroke="#fff" strokeWidth="1.200" /></svg></App16>
    <App16 active><span className="relative"><Chrome /><span className="absolute top-[8px] left-[8px] flex size-[9px] items-center justify-center rounded-full bg-[#15805c] text-[6px]">O</span></span></App16>
    <App16 line><span className="flex size-[15px] items-center justify-center rounded-[5px] bg-[#4a86e8]"><MdVideocam className="size-[12px]" /></span></App16>
    <div className="ml-auto flex h-full items-center text-[9.330px] tracking-[-0.230px] whitespace-nowrap">
      <span className="mr-[7px] size-[13px] rounded-full bg-linear-to-br from-[#fbd850] to-[#f09a1c]" /><span className="mr-[7px]">31°C</span>Güneşli
      <ChevronUp className="mr-[4px] ml-[8px] size-[11px]" strokeWidth={2} />
      <span className="mr-[7px] flex size-[10px] items-center justify-center rounded-full bg-[#a92527] text-[7px] font-bold">C</span>
      <FaMicrophone className="mr-[6px] size-[10px]" />
      <svg viewBox="0 0 10 10" className="mr-[5px] size-[10px]" fill="none" stroke="#fff" strokeWidth="1"><rect x="1.500" y="2" width="6.500" height="6.500" rx="1" /><path d="M3 .6h4M3 9.600h4M8 4.200h1.500v2.200H8" /><circle cx="4.800" cy="5.200" r="1.200" /></svg>
      <svg viewBox="0 0 12 8" className="mr-[6px] h-[8px] w-[12px]"><path d="M2.500 1.500h8v1.500h1v2.500h-1V7h-8z" fill="#fff" /><path d="M0 1h3M0 2.800h3M3 0v4" stroke="#fff" /></svg>
      <Wifi className="mr-[4px] size-[11px] rotate-45 text-[#b5b5b5]" strokeWidth={2} />
      <Volume2 className="mr-[5px] size-[12px]" strokeWidth={1.700} />
      <div className="mr-[7px] w-[37px] text-center text-[8px] leading-[11.500px] tracking-[-0.450px]">18:20<br />27.08.2021</div>
      <span className="relative mr-[11px] h-[16px] w-[18px]">
        <svg viewBox="0 0 18 16" className="size-full"><path d="M1 1h11v8.500H7L4.500 12V9.500H1z" fill="#fff" /><path d="M2.500 3.500h8M2.500 5.500h8M2.500 7.500h5" stroke="#777" strokeWidth=".6" /><circle cx="11.500" cy="10.500" r="5" fill="#1f2021" stroke="#d6d6d6" strokeWidth=".9" /></svg>
        <span className="absolute top-[5px] left-[7px] flex h-[11px] w-[9px] items-center justify-center text-[8px] leading-none">2</span>
      </span>
      <span className="mr-[2px] h-full w-px bg-[#56585a]" />
    </div>
  </div>
);

export default function App() {
  return (
    <div className="relative flex h-[720px] w-[1280px] flex-col overflow-hidden bg-white">
      <Browser />
      <div className="flex h-[624px] font-['Roboto',sans-serif] text-[9.330px] leading-[normal]">
        <Sidebar />
        <AdSets />
        <Rail />
        <Tree />
        <Editor />
      </div>
      <Taskbar />
      <svg viewBox="0 0 9 13" className="absolute top-[361px] left-[853px] h-[13px] w-[9px]"><path d="M.7.7v9.800l2.200-2 1.500 3.600 1.500-.7-1.500-3.400h3.100z" fill="#fff" stroke="#222" strokeWidth=".8" /></svg>
    </div>
  );
}
